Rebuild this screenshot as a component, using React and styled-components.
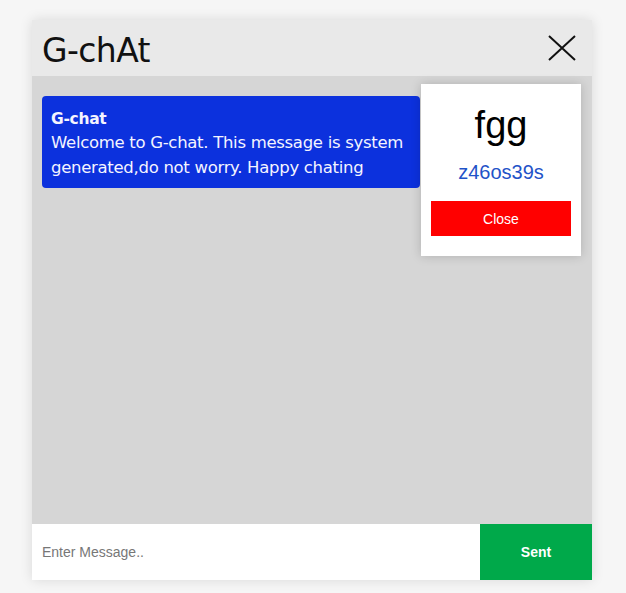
import React from 'react';
import styled, { createGlobalStyle } from 'styled-components';

const Global = createGlobalStyle`
  body {
    margin: 0;
    background: #f6f6f6;
    font-family: "DejaVu Sans", sans-serif;
  }
`

const Page = styled.div`
  padding: 20px 34px 13px 32px;
`

const ChatBox = styled.div`
  width: 560px;
  height: 560px;
  display: flex;
  flex-direction: column;
  box-shadow: 0 0 12px rgba(0, 0, 0, 0.12);
  position: relative;
`

const Header = styled.header`
  height: 56px;
  background: #e9e9e9;
  display: flex;
  align-items: center;
  justify-content: space-between;
  padding: 0 16px 0 10px;
`

const Title = styled.h1`
  margin: 0;
  font-family: "DejaVu Sans", sans-serif;
  font-weight: 400;
  font-size: 33px;
  letter-spacing: -0.6px;
  color: #111;
  padding-top: 4px;
`

const CloseIcon = styled.button`
  border: none;
  background: transparent;
  padding: 0;
  width: 28px;
  height: 28px;
  cursor: pointer;
  display: flex;
`

const Body = styled.div`
  flex: 1;
  background: #d6d6d6;
  padding: 20px 10px;
`

const Bubble = styled.div`
  width: 378px;
  box-sizing: border-box;
  background: #0c31dd;
  border-radius: 4px;
  padding: 12px 9px 8px;
  color: #f4f4ff;
`

const Sender = styled.div`
  font-weight: 700;
  font-size: 15.5px;
  line-height: 22px;
  letter-spacing: -0.3px;
`

const Text = styled.div`
  font-size: 16.5px;
  line-height: 25px;
  letter-spacing: -0.3px;
`

const UserCard = styled.div`
  position: absolute;
  top: 64px;
  right: 11px;
  width: 160px;
  background: #fff;
  box-shadow: 0 0 10px rgba(0, 0, 0, 0.18);
  display: flex;
  flex-direction: column;
  align-items: center;
  padding: 18px 10px 20px;
  box-sizing: border-box;
`

const Name = styled.div`
  font-family: "Liberation Sans", Arial, sans-serif;
  font-size: 38px;
  line-height: 46px;
  color: #000;
`

const Code = styled.div`
  font-family: "Liberation Sans", Arial, sans-serif;
  font-size: 20px;
  line-height: 24px;
  color: #1f53c8;
  margin-top: 12px;
`

const Button = styled.button`
  border: none;
  font-family: "Liberation Sans", Arial, sans-serif;
  color: #fff;
  background: ${({ bg }) => bg};
  font-weight: ${({ bold }) => (bold ? 700 : 400)};
  font-size: 13px;
  cursor: pointer;
`

const CardButton = styled(Button)`
  width: 140px;
  height: 35px;
  margin-top: 17px;
  font-size: 14px;
`

const Footer = styled.div`
  height: 56px;
  display: flex;
`

const Input = styled.input`
  flex: 1;
  border: none;
  outline: none;
  background: #fff;
  padding: 0 10px;
  font-family: "Liberation Sans", Arial, sans-serif;
  font-size: 14px;
  &::placeholder {
    color: #777;
  }
`

const SendButton = styled(Button)`
  width: 112px;
  font-size: 14px;
`

export default function App() {
  return (
    <>
      <Global />
      <Page>
        <ChatBox>
          <Header>
            <Title>G-chAt</Title>
            <CloseIcon>
              <svg width="28" height="28" viewBox="0 0 28 28">
                <path d="M1 2 L27 26 M27 2 L1 26" stroke="#111" strokeWidth="2" />
              </svg>
            </CloseIcon>
          </Header>
          <Body>
            <Bubble>
              <Sender>G-chat</Sender>
              <Text>Welcome to G-chat. This message is system generated,do not worry. Happy chating</Text>
            </Bubble>
          </Body>
          <Footer>
            <Input placeholder="Enter Message.." />
            <SendButton bg="#00a94a" bold>Sent</SendButton>
          </Footer>
          <UserCard>
            <Name>fgg</Name>
            <Code>z46os39s</Code>
            <CardButton bg="#ff0000">Close</CardButton>
          </UserCard>
        </ChatBox>
      </Page>
    </>
  )
}
